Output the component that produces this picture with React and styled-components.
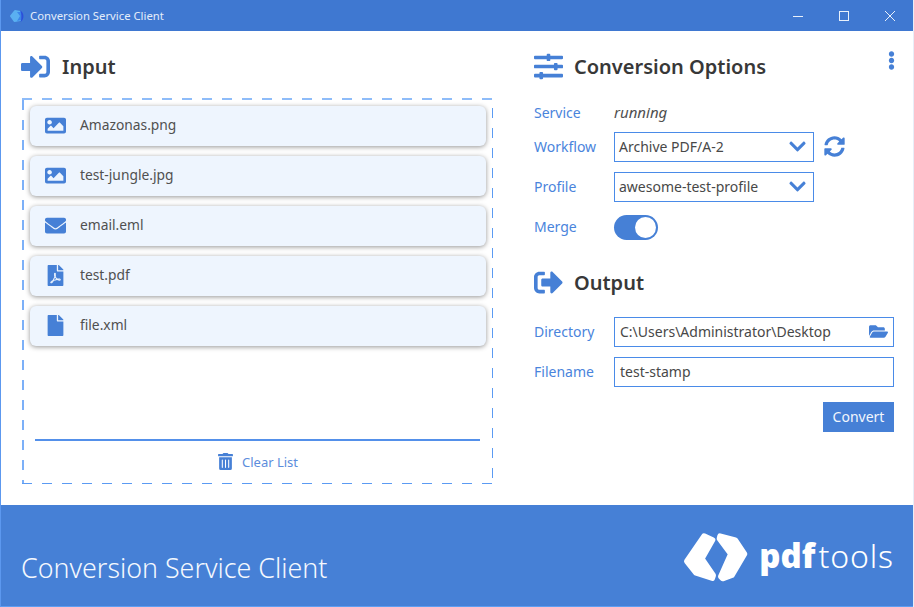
import React from 'react';
import styled, { createGlobalStyle } from 'styled-components';
import {
  FaSignInAlt,
  FaSignOutAlt,
  FaSlidersH,
  FaImage,
  FaEnvelope,
  FaFilePdf,
  FaFile,
  FaTrashAlt,
  FaFolderOpen,
  FaSyncAlt,
  FaChevronDown,
  FaEllipsisV,
} from 'react-icons/fa';

const GlobalStyle = createGlobalStyle`
  * { box-sizing: border-box; }
  html, body { margin: 0; padding: 0; background: #fff; }
  body { font-family: "Noto Sans", "Open Sans", sans-serif; color: #444; }
`;

const Window = styled.div`
  width: 914px;
  height: 607px;
  display: flex;
  flex-direction: column;
  border-left: 1px solid #5c98ef;
  border-right: 1px solid #e8eef8;
  overflow: hidden;
`;

const TitleBar = styled.header`
  height: 31px;
  margin: 0 -1px;
  flex-shrink: 0;
  display: flex;
  align-items: center;
  padding-left: 9px;
  background: #3f78d1;
  color: #e4edfa;
  font-size: 11.3px;
`;

const TitleText = styled.span`
  margin-left: 5px;
  padding-bottom: 1px;
`;

const WindowButton = styled.button`
  width: 46px;
  height: 31px;
  padding: 0;
  border: 0;
  background: none;
  display: flex;
  align-items: center;
  justify-content: center;
`;

const WindowButtons = styled.div`
  margin-left: auto;
  display: flex;
  margin-right: 1px;
`;

const Main = styled.main`
  flex: 1;
  display: flex;
  padding: 20px 19px 21px 20px;
  gap: 41px;
  min-height: 0;
`;

const LeftColumn = styled.section`
  width: 472px;
  display: flex;
  flex-direction: column;
`;

const RightColumn = styled.section`
  flex: 1;
  display: flex;
  flex-direction: column;
`;

const Heading = styled.div`
  height: 30px;
  display: flex;
  align-items: center;
  gap: ${(p) => p.$gap || 11}px;
  margin-top: ${(p) => p.$top || 0}px;
  margin-bottom: ${(p) => p.$bottom || 0}px;
  color: #4680d6;
  font-size: 29px;
`;

const HeadingText = styled.h2`
  margin: 0;
  color: #383838;
  font-size: 20px;
  font-weight: 600;
`;

const MoreButton = styled.span`
  margin-left: auto;
  align-self: flex-start;
  margin-top: 0;
  margin-right: -7px;
  font-size: 19px;
  line-height: 19px;
  color: #4680d6;
`;

const DropZone = styled.div`
  flex: 1;
  display: flex;
  flex-direction: column;
  margin-left: 1px;
  padding: 8px 7px 0 8px;
  background-color: #fff;
  background-image:
    repeating-linear-gradient(90deg, #8ebcf9 0 10px, transparent 10px 20px),
    repeating-linear-gradient(90deg, #5b9bf3 0 10px, transparent 10px 20px),
    repeating-linear-gradient(180deg, transparent 0 2px, #7cb0f8 2px 12px, transparent 12px 20px),
    repeating-linear-gradient(180deg, transparent 0 10px, #5b9bf3 10px 20px);
  background-size: 100% 2px, 100% 1px, 2px 100%, 1px 100%;
  background-position: 0 0, 0 100%, 0 0, 100% 0;
  background-repeat: no-repeat;
`;

const FileList = styled.ul`
  flex: 1;
  margin: 0;
  padding: 0;
  list-style: none;
  display: flex;
  flex-direction: column;
  gap: 10px;
`;

const FileItem = styled.li`
  height: 40px;
  display: flex;
  align-items: center;
  padding-left: 15px;
  border-radius: 6px;
  background: #eef5fe;
  box-shadow: 0 1px 5px rgba(0, 0, 0, 0.42);
  font-size: 13.8px;
  color: #505050;
`;

const FileIcon = styled.span`
  width: 21px;
  margin-right: 14px;
  padding-bottom: 1px;
  display: flex;
  justify-content: center;
  color: #4680d6;
  font-size: 21px;
`;

const FileName = styled.span`
  padding-bottom: 4px;
`;

const ClearBar = styled.div`
  height: 45px;
  margin: 0 6px 0 5px;
  padding-bottom: 2px;
  border-top: 2px solid #5490ea;
  display: flex;
  align-items: center;
  justify-content: center;
  gap: 8px;
  color: #5c8ddc;
  font-size: 13px;
  svg {
    color: #4680d6;
    font-size: 17px;
  }
`;

const Row = styled.div`
  display: grid;
  grid-template-columns: 80px 1fr;
  align-items: center;
  height: ${(p) => p.$height || 30}px;
  margin-bottom: 10px;
`;

const Label = styled.label`
  padding-bottom: 2px;
  color: #4a84dc;
  font-size: 14px;
`;

const StatusText = styled.span`
  padding-bottom: 2px;
  font-style: italic;
  font-size: 15px;
  color: #505050;
`;

const Controls = styled.div`
  display: flex;
  align-items: center;
  gap: 10px;
  svg.sync {
    margin-bottom: 1px;
  }
`;

const Field = styled.div`
  width: ${(p) => p.$width || '100%'};
  height: 30px;
  display: flex;
  align-items: center;
  justify-content: space-between;
  padding: 0 ${(p) => p.$right || 5}px 2px ${(p) => p.$left || 4}px;
  border: 1px solid #4a8be8;
  font-size: 14px;
  color: #484848;
  svg {
    color: #4680d6;
  }
`;

const Toggle = styled.div`
  width: 44px;
  height: 25px;
  padding: 2px;
  display: flex;
  justify-content: flex-end;
  border-radius: 13px;
  background: #4680d6;
`;

const ToggleKnob = styled.span`
  width: 21px;
  height: 21px;
  border-radius: 50%;
  background: #fff;
`;

const ButtonRow = styled.div`
  display: flex;
  justify-content: flex-end;
  margin-top: 5px;
`;

const ConvertButton = styled.button`
  width: 71px;
  height: 30px;
  padding: 0 0 2px;
  border: 0;
  background: #4680d6;
  color: #f2f6fd;
  font-family: inherit;
  font-size: 14px;
`;

const Footer = styled.footer`
  height: 102px;
  margin: 0 -1px;
  flex-shrink: 0;
  display: flex;
  justify-content: space-between;
  padding: 0 20px 0 21px;
  background: #4680d6;
  border-bottom: 1px solid #5c9df2;
  color: #fff;
`;

const FooterTitle = styled.div`
  align-self: flex-end;
  margin-bottom: 20px;
  font-size: 26.8px;
  line-height: 36px;
  font-weight: 300;
  color: #f4f8fe;
`;

const Brand = styled.div`
  align-self: flex-start;
  display: flex;
  align-items: center;
  gap: 7px;
  margin-top: 23px;
`;

const BrandName = styled.div`
  font-size: 32px;
  line-height: 40px;
  font-weight: 300;
  letter-spacing: 0.9px;
  padding-bottom: 4px;
  b {
    font-size: 33px;
    font-weight: 900;
    letter-spacing: 0;
    margin-right: 3px;
  }
`;

const files = [
  { name: 'Amazonas.png', icon: FaImage },
  { name: 'test-jungle.jpg', icon: FaImage },
  { name: 'email.eml', icon: FaEnvelope },
  { name: 'test.pdf', icon: FaFilePdf },
  { name: 'file.xml', icon: FaFile },
];

function AppIcon() {
  return (
    <svg width="16" height="14" viewBox="0 0 16 14">
      <path d="M6 2 L2 7 L5.5 12 L11 11 L11 3 Z" fill="#5ab0f1" stroke="#5ab0f1" strokeWidth="2" strokeLinejoin="round" />
      <path d="M8 3 L11 7 L8 12 L12 11 L12 3 Z" fill="#3b86ea" />
      <path d="M11 1.5 C15 3 16 10 11.5 13 C13 9 13 5 11 1.5 Z" fill="#2a50dc" />
    </svg>
  );
}

function Logo() {
  return (
    <svg width="72" height="60" viewBox="0 0 216 180">
      <path
        d="M72 24 L98 36 L66 92 L100 142 L97 151 L48 135 L20 100 Z"
        fill="#fff"
        stroke="#fff"
        strokeWidth="16"
        strokeLinejoin="round"
      />
      <path
        d="M120 24 L166 36 L194 78 L156 142 L128 152 L122 146 L152 78 L118 32 Z"
        fill="#fff"
        stroke="#fff"
        strokeWidth="16"
        strokeLinejoin="round"
      />
    </svg>
  );
}

export default function App() {
  return (
    <>
      <GlobalStyle />
      <Window>
        <TitleBar>
          <AppIcon />
          <TitleText>Conversion Service Client</TitleText>
          <WindowButtons>
            <WindowButton aria-label="Minimize">
              <svg width="10" height="10" viewBox="0 0 10 10">
                <path d="M0 5.5H10" stroke="#e8f0fb" strokeWidth="1" />
              </svg>
            </WindowButton>
            <WindowButton aria-label="Maximize">
              <svg width="10" height="10" viewBox="0 0 10 10">
                <rect x="0.5" y="0.5" width="9" height="9" fill="none" stroke="#e8f0fb" />
              </svg>
            </WindowButton>
            <WindowButton aria-label="Close">
              <svg width="10" height="10" viewBox="0 0 10 10">
                <path d="M0 0L10 10M10 0L0 10" stroke="#e8f0fb" strokeWidth="1" />
              </svg>
            </WindowButton>
          </WindowButtons>
        </TitleBar>

        <Main>
          <LeftColumn>
            <Heading $gap={12} $bottom={17}>
              <FaSignInAlt />
              <HeadingText>Input</HeadingText>
            </Heading>
            <DropZone>
              <FileList>
                {files.map((file) => (
                  <FileItem key={file.name}>
                    <FileIcon>
                      <file.icon />
                    </FileIcon>
                    <FileName>{file.name}</FileName>
                  </FileItem>
                ))}
              </FileList>
              <ClearBar>
                <FaTrashAlt />
                Clear List
              </ClearBar>
            </DropZone>
          </LeftColumn>

          <RightColumn>
            <Heading $bottom={21}>
              <FaSlidersH />
              <HeadingText>Conversion Options</HeadingText>
              <MoreButton>
                <FaEllipsisV />
              </MoreButton>
            </Heading>
            <Row $height={20}>
              <Label>Service</Label>
              <StatusText>running</StatusText>
            </Row>
            <Row>
              <Label>Workflow</Label>
              <Controls>
                <Field $width="200px" $right={6}>
                  Archive PDF/A-2
                  <FaChevronDown size={19} />
                </Field>
                <FaSyncAlt className="sync" size={21} color="#4680d6" />
              </Controls>
            </Row>
            <Row>
              <Label>Profile</Label>
              <Field $width="200px" $right={6}>
                awesome-test-profile
                <FaChevronDown size={19} />
              </Field>
            </Row>
            <Row>
              <Label>Merge</Label>
              <Toggle>
                <ToggleKnob />
              </Toggle>
            </Row>

            <Heading $top={15} $bottom={20}>
              <FaSignOutAlt />
              <HeadingText>Output</HeadingText>
            </Heading>
            <Row>
              <Label>Directory</Label>
              <Field $left={5}>
                C:\Users\Administrator\Desktop
                <FaFolderOpen size={19} />
              </Field>
            </Row>
            <Row>
              <Label>Filename</Label>
              <Field $left={5}>test-stamp</Field>
            </Row>
            <ButtonRow>
              <ConvertButton>Convert</ConvertButton>
            </ButtonRow>
          </RightColumn>
        </Main>

        <Footer>
          <FooterTitle>Conversion Service Client</FooterTitle>
          <Brand>
            <Logo />
            <BrandName>
              <b>pdf</b>tools
            </BrandName>
          </Brand>
        </Footer>
      </Window>
    </>
  );
}
